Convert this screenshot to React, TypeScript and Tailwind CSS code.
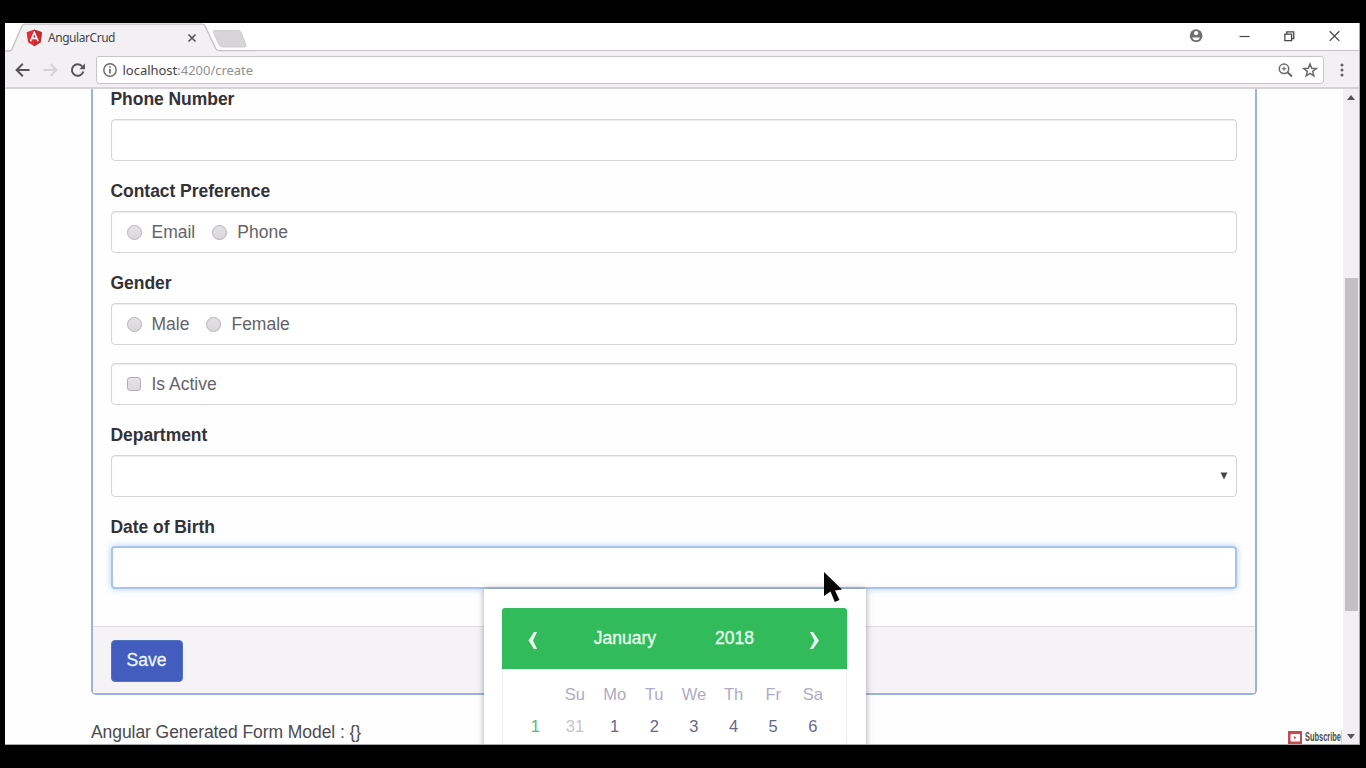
import React from "react";

function TabStrip() {
  return (
    <div className="relative flex h-[28px] bg-white">
      <svg className="h-[29px] w-[250px] shrink-0" viewBox="0 0 250 29" fill="none">
        <path d="M5 29 L16 3 Q17 1 19 1 H198 Q200 1 201 3 L213 29Z" fill="#f2f0f3" />
        <path d="M0 28 H5 Q6 28 7 26 L17 3 Q18 1.200 20 1.200 H197 Q199 1.200 200 3 L211 26 Q212 27.600 214 27.600 H250" stroke="#c3c1c4" strokeWidth="1.300" />
        <path d="M208 8.500 Q208 7.500 210 7.500 H233 Q235 7.500 236 9 L241 22 Q242 24 239 24 H218 Q215 24 214 22Z" fill="#d7d5d8" stroke="#c8c6c9" strokeWidth=".8" />
        <path d="M29.300 6.500 L37 9.200 L35.700 19.300 L29.300 23.300 L23 19.300 L21.600 9.200Z" fill="#e32e35" />
        <path d="M29.300 6.500 L37 9.200 L35.700 19.300 L29.300 23.300Z" fill="#c42c32" />
        <path d="M25.500 18.300 L29.300 9.500 L33.100 18.300 M27 15.400 H31.600" stroke="#fff" strokeWidth="1.600" />
        <path d="M183.500 11.500 L190.500 18.500 M190.500 11.500 L183.500 18.500" stroke="#555" strokeWidth="1.600" />
      </svg>
      <span className="absolute left-[43px] top-[6px] font-['Noto_Sans',sans-serif] text-[12px] leading-[18px] tracking-[-0.450px] text-[#48464a]">AngularCrud</span>
      <div className="flex-1 border-b border-[#c5c3c6]" />
      <svg className="h-[28px] w-[184px] shrink-0 border-b border-[#c5c3c6]" viewBox="0 0 184 28" fill="none">
        <circle cx="18.500" cy="13.200" r="6.600" transform="translate(0 0)" fill="#6f6e70" />
        <circle cx="18.500" cy="10.500" r="2.200" fill="#fff" />
        <path d="M14.200 15 H22.800 Q21.500 17.800 18.500 17.800 T14.200 15" fill="#fff" />
        <path d="M63.500 14 H74" stroke="#444" strokeWidth="1.200" />
        <path d="M110.500 11.500 H117.500 V18.200 H110.500Z M112.500 11.500 V9.300 H119.700 V16.200 H117.500" stroke="#444" strokeWidth="1.300" />
        <path d="M157 8.500 L167 18.500 M167 8.500 L157 18.500" stroke="#444" strokeWidth="1.300" />
      </svg>
    </div>
  );
}

function Toolbar() {
  return (
    <div className="flex h-[38px] shrink-0 items-center border-b-2 border-[#d5d3d6] bg-[#f2f0f3]">
      <svg className="h-[36px] w-[91px] shrink-0" viewBox="0 0 91 36" fill="none" strokeWidth="2">
        <path d="M24.500 19 H12 M17.800 12.800 L11.600 19 L17.800 25.200" stroke="#555357" />
        <path d="M38.500 19 H51 M45.500 13 L51.500 19 L45.500 25" stroke="#d4d2d5" />
        <path d="M77.300 15.500 A5.800 5.800 0 1 0 78.300 20.500" stroke="#555357" />
        <path d="M80 12.500 V18.200 H74.300Z" fill="#555357" />
      </svg>
      <div className="mt-[2px] flex h-[28px] flex-1 items-center rounded-[3px] border-[1.500px] border-[#c8c6c9] bg-white">
        <svg className="ml-[6px] h-[16px] w-[15px]" viewBox="0 0 15 16" fill="none" stroke="#6a696b" strokeWidth="1.400">
          <circle cx="7" cy="8" r="6.200" />
          <path d="M7 7 V11.500 M7 4.200 V5.800" strokeWidth="1.700" />
        </svg>
        <span className="ml-[4.500px] font-['Noto_Sans',sans-serif] text-[13px] leading-[20px] tracking-[-0.020px] text-[#918f93]"><span className="text-[#454347]">localhost</span>:4200/create</span>
        <svg className="ml-auto mr-[5px] h-[20px] w-[46px]" viewBox="0 0 46 20" fill="none" stroke="#69676b" strokeWidth="1.500">
          <circle cx="12" cy="8.800" r="4.700" />
          <path d="M15.500 12.300 L20 16.500" strokeWidth="2" />
          <path d="M9.700 8.800 H14.300 M12 6.500 V11.100" strokeWidth="1.100" />
          <path d="M38 4 L39.700 8.200 L44.200 8.500 L40.700 11.400 L41.800 15.800 L38 13.400 L34.200 15.800 L35.300 11.400 L31.800 8.500 L36.300 8.200Z" />
        </svg>
      </div>
      <svg className="h-[36px] w-[35px] shrink-0" viewBox="0 0 35 36" fill="#626064">
        <circle cx="18" cy="14" r="1.500" /><circle cx="18" cy="19" r="1.500" /><circle cx="18" cy="24" r="1.500" />
      </svg>
    </div>
  );
}

function Label({ children }: { children: React.ReactNode }) {
  return <div className="h-[31px] text-[17.500px] font-bold leading-[22px] tracking-[-0.050px] text-[#343236]">{children}</div>;
}

const box = "flex h-[42px] items-center rounded-[4px] border-[1.500px] border-[#d6d4d7] bg-white shadow-[inset_0_1px_1px_rgba(0,0,0,0.08)] text-[17.500px] text-[#656367]";

function Radio() {
  return <span className="mr-[10px] h-[15px] w-[15px] shrink-0 rounded-full border border-[#b3b1b4] bg-linear-to-b from-[#e4e2e5] to-[#d9d7da]" />;
}

function RadioBox({ items }: { items: string[] }) {
  return (
    <div className={`${box} gap-[17px] pl-[15px]`}>
      {items.map((t) => (
        <label key={t} className="flex items-center">
          <Radio />
          <span className="leading-[20px]">{t}</span>
        </label>
      ))}
    </div>
  );
}

function Calendar() {
  const head = ["", "Su", "Mo", "Tu", "We", "Th", "Fr", "Sa"];
  const days = ["1", "31", "1", "2", "3", "4", "5", "6"];
  return (
    <div className="absolute left-[391px] top-[501px] h-[190px] w-[382px] bg-white pl-[18px] pr-[19px] pt-[19px] shadow-[0_0_6px_rgba(70,65,90,0.500)]">
      <div className="h-full border-x border-[#efedf0]">
        <div className="-mx-px flex h-[61px] rounded-t-[3px] bg-[#32bb5a] text-[17.500px] text-[#eaffef]">
          <svg className="h-[62px] w-[62px] shrink-0" viewBox="0 0 62 62"><path d="M32.500 24 H35.500 L31.500 32.500 L35.500 41 H32.500 L27 32.500Z" transform="translate(-0.500 0)" fill="#eaffef" /></svg>
          <span className="w-[122px] shrink-0 pt-[19px] text-center leading-[22px] [-webkit-text-stroke:0.300px_#eaffef]">January</span>
          <span className="w-[97px] shrink-0 pt-[19px] text-center leading-[22px] [-webkit-text-stroke:0.300px_#eaffef]">2018</span>
          <svg className="h-[62px] w-[62px] shrink-0" viewBox="0 0 62 62"><path d="M29 24 H26 L30.500 32.500 L26 41 H29 L35 32.500Z" transform="translate(1 0)" fill="#eaffef" /></svg>
        </div>
        <div className="ml-[12.500px] mt-[9px] grid grid-cols-[repeat(8,39.650px)] text-center text-[16.500px] leading-[32px]">
          {head.map((h, i) => <span key={i} className="text-[#acabc5]">{h}</span>)}
          {days.map((d, i) => (
            <span key={i} className={i === 0 ? "text-[#55b979]" : i === 1 ? "text-[#c5c3ce]" : "text-[#66668e]"}>{d}</span>
          ))}
        </div>
      </div>
    </div>
  );
}

function EmployeeForm() {
  return (
    <div className="relative -mt-px ml-[86px] h-[607px] w-[1166px] rounded-b-[5px] border-x-2 border-b-2 border-[#9bb2dd]">
      <div className="h-[538px] pl-[17.500px] pr-[18.500px]">
        <Label>Phone Number</Label>
        <div className={box} />
        <div className="h-[19px]" />
        <Label>Contact Preference</Label>
        <RadioBox items={["Email", "Phone"]} />
        <div className="h-[19px]" />
        <Label>Gender</Label>
        <RadioBox items={["Male", "Female"]} />
        <div className="h-[18px]" />
        <div className={`${box} pl-[15px]`}>
          <span className="mr-[11px] h-[14px] w-[14px] rounded-[3px] border border-[#b3b1b4] bg-linear-to-b from-[#e6e4e7] to-[#d9d7da]" />
          Is Active
        </div>
        <div className="h-[19px]" />
        <Label>Department</Label>
        <div className={`${box} justify-end pr-[8px]`}>
          <svg className="h-[8px] w-[8px]" viewBox="0 0 8 8"><path d="M.5 .5 H7.500 L4 7.500Z" fill="#49474b" /></svg>
        </div>
        <div className="h-[19px]" />
        <div className="-mb-px"><Label>Date of Birth</Label></div>
        <div className="h-[43px] rounded-[4px] border-2 border-[#a9c4ec] bg-white shadow-[0_0_6px_rgba(110,160,240,0.500)]" />
      </div>
      <div className="h-[67px] border-t border-[#dedce0] bg-[#f5f3f6] pl-[17.500px] pt-[13px]">
        <button className="flex h-[42px] w-[72px] items-center justify-center rounded-[4px] border border-[#5276bd] bg-[#435dbf] pb-[2px] text-[17.500px] text-[#ecf4ff] [-webkit-text-stroke:0.300px_#ecf4ff]">Save</button>
      </div>
      <Calendar />
      <svg className="absolute left-[730px] top-[483px] h-[34px] w-[22px]" viewBox="0 0 22 34"><path d="M1 1 L19 18.500 L12 19.500 L16.500 29 L11.800 31 L7.500 20.500 L1 25Z" fill="#080707" /></svg>
    </div>
  );
}

function Scrollbar() {
  return (
    <div className="flex w-[16px] shrink-0 flex-col items-center bg-[#f1eff2]">
      <svg className="mt-[6px] h-[5px] w-[8px] shrink-0" viewBox="0 0 8 5"><path d="M0 5 L4 0 L8 5Z" fill="#555357" /></svg>
      <div className="mt-[178px] h-[333px] w-[13px] shrink-0 bg-[#c2c0c3]" />
      <svg className="mt-[123px] h-[5px] w-[8px] shrink-0" viewBox="0 0 8 5"><path d="M0 0 L4 5 L8 0Z" fill="#555357" /></svg>
    </div>
  );
}

export default function App() {
  return (
    <div className="h-[768px] w-[1366px] overflow-hidden bg-black pl-[5px] pt-[23px] font-['Liberation_Sans',Arial,sans-serif]">
      <div className="flex h-[722px] w-[1355px] flex-col overflow-hidden border-b border-r border-[#aaa8ab] bg-white">
        <TabStrip />
        <Toolbar />
        <div className="flex min-h-0 flex-1">
          <main className="relative flex flex-1 flex-col overflow-hidden bg-[#fefefe]">
            <EmployeeForm />
            <p className="ml-[86px] mt-[25px] text-[17.500px] leading-[24px] tracking-[-0.070px] text-[#4c4a4e]">Angular Generated Form Model : {"{}"}</p>
            <div className="absolute bottom-0 right-px flex h-[14px] w-[54px] items-center border-r border-[#d5d3d6] bg-white">
              <svg className="h-[13px] w-[14px] shrink-0" viewBox="0 0 14 13"><rect width="14" height="13" fill="#c94a4d" /><rect x="2.500" y="3" width="9.500" height="7.500" rx="1" fill="#fff" /><path d="M6 5 L8.500 6.700 L6 8.300Z" fill="#c94a4d" /></svg>
              <span className="ml-[3px] w-[35px] origin-left scale-x-[0.620] text-[12px] font-bold leading-[13px] text-[#4b494d]">Subscribe</span>
            </div>
          </main>
          <Scrollbar />
        </div>
      </div>
    </div>
  );
}
